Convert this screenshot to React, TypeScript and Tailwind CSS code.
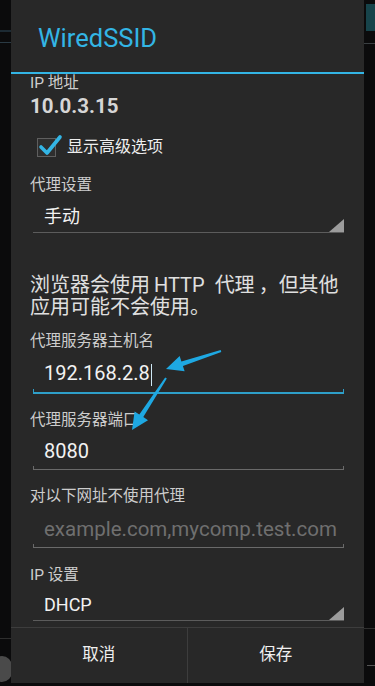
import React from 'react'

// polygon for a hand-drawn style arrow (tail thin, head wide)
function arrowPoints(tx: number, ty: number, hx: number, hy: number, head = 17, half = 8) {
  const dx = hx - tx
  const dy = hy - ty
  const len = Math.hypot(dx, dy)
  const ux = dx / len
  const uy = dy / len
  const px = -uy
  const py = ux
  const bx = hx - ux * head
  const by = hy - uy * head
  const pts = [
    [tx + px * 1, ty + py * 1],
    [bx + px * 2.4, by + py * 2.4],
    [bx + px * half, by + py * half],
    [hx, hy],
    [bx - px * half, by - py * half],
    [bx - px * 2.4, by - py * 2.4],
    [tx - px * 1, ty - py * 1],
  ]
  return pts.map((p) => p.join(',')).join(' ')
}

const Label = ({ children, className = '' }: { children: React.ReactNode; className?: string }) => (
  <div className={`h-[22px] leading-[22px] text-[15.5px] text-[#cdcdcd] ${className}`}>{children}</div>
)

function Spinner({ value, className = '' }: { value: string; className?: string }) {
  return (
    <div className={`ml-[3px] w-[311px] flex items-end justify-between border-b border-[#5c5c5c] ${className}`}>
      <span className="pl-[11px] leading-[24px] text-[18px] text-[#f2f2f2] mb-[3px]">{value}</span>
      <svg width="15" height="13" viewBox="0 0 15 13" className="block">
        <polygon points="15,0 15,13 0,13" fill="#9c9c9c" />
      </svg>
    </div>
  )
}

function Field({
  value,
  placeholder,
  focused,
  className = '',
}: {
  value?: string
  placeholder?: string
  focused?: boolean
  className?: string
}) {
  const line = focused ? 'border-[#2e9fc9]' : 'border-[#6a6a6a]'
  return (
    <div className={`ml-[3px] w-[311px] ${className}`}>
      <div className="pl-[11px] pr-[10px] overflow-hidden whitespace-nowrap leading-[24px] text-[20px]">
        {value ? (
          <span className="text-[#f2f2f2]">
            {value}
            {focused && <span className="inline-block align-middle ml-[1px] w-[1.5px] h-[22px] bg-[#cfe8f5]" />}
          </span>
        ) : (
          <span className="text-[20.5px] text-[#6f6f6f]">{placeholder}</span>
        )}
      </div>
      <div className={`mt-[3px] ${focused ? 'h-[5px] border-b-2' : 'h-[4px] border-b'} border-x ${line}`} />
    </div>
  )
}

export default function App() {
  return (
    <div className="relative w-[375px] h-[686px] bg-[#0b0b0c] overflow-hidden font-[Roboto,'Noto_Sans_CJK_SC',sans-serif]">
      {/* what shows behind the dialog */}
      <div className="absolute left-0 top-[30px] w-[11px] h-[2px] bg-[#1c2a33]" />
      <div className="absolute left-0 top-[42px] w-[11px] h-[1px] bg-[#2a3a44]" />
      <div className="absolute right-0 top-[4px] w-[9px] h-[27px] bg-[#17444b]" />
      <div className="absolute right-0 top-[43px] w-[11px] h-[1px] bg-[#3a3f42]" />
      <div className="absolute right-0 top-[628px] w-[11px] h-[1px] bg-[#2e2e2e]" />
      <div className="absolute left-0 top-[638px] w-[11px] h-[1px] bg-[#2e2e2e]" />
      <div className="absolute left-[-8px] top-[656px] w-[20px] h-[26px] rounded-full bg-[#4a4a4a]" />
      <div className="absolute right-0 top-[665px] w-[8px] h-[1px] bg-[#555]" />

      <div className="relative ml-[11px] w-[353px] h-[683px] bg-[#282828] flex flex-col">
        <div className="h-[72px] pt-[4px] pl-[27px] flex items-center text-[25.5px] text-[#33b5e5]">WiredSSID</div>
        <div className="h-[2px] bg-[#33b5e5]" />

        <div className="flex-1 pl-[19px] pr-[20px]">
          <div className="h-[18px] leading-[18px] text-[15.5px] text-[#cdcdcd]">IP 地址</div>
          <div className="h-[28px] leading-[28px] text-[20.5px] font-bold text-[#d6d6d6]">10.0.3.15</div>

          <div className="mt-[6px] h-[42px] flex items-center">
            <div className="relative ml-[7px] w-[19px] h-[19px] border border-[#5f5f5f] bg-[#2e2e2e]">
              <svg width="26" height="24" viewBox="0 0 26 24" className="absolute left-[0px] top-[-7px]">
                <path d="M3 15 L9 21 L22 5" fill="none" stroke="#33b5e5" strokeWidth="3.6" strokeLinecap="round" strokeLinejoin="round" />
              </svg>
            </div>
            <span className="ml-[11px] text-[16px] text-[#eeeeee]">显示高级选项</span>
          </div>

          <Label className="mt-[6px]">代理设置</Label>
          <Spinner value="手动" className="h-[37px]" />

          <div className="mt-[41px] leading-[22px] text-[20px] text-[#e0e0e0]">
            <div className="whitespace-nowrap">
              浏览器会使用<span className="ml-[4px]">HTTP</span>
              <span className="ml-[10px]">代理</span>
              <span className="ml-[4px]">，</span>
              <span>但其他</span>
            </div>
            <div>应用可能不会使用。</div>
          </div>

          <Label className="mt-[12px]">代理服务器主机名</Label>
          <Field value="192.168.2.8" focused className="pt-[9px]" />

          <Label className="mt-[15px]">代理服务器端口</Label>
          <Field value="8080" className="pt-[8px]" />

          <Label className="mt-[15px]">对以下网址不使用代理</Label>
          <Field placeholder="example.com,mycomp.test.com" className="pt-[10px]" />

          <Label className="mt-[16px]">IP 设置</Label>
          <Spinner value="DHCP" className="h-[35px]" />
        </div>

        <div className="h-[56px] border-t border-[#3d3d3d] grid grid-cols-2">
          <button className="flex items-center justify-center text-[16.5px] text-[#f0f0f0] border-r border-[#3d3d3d]">取消</button>
          <button className="flex items-center justify-center text-[16.5px] text-[#f0f0f0]">保存</button>
        </div>
      </div>

      {/* annotation arrows drawn over the screenshot */}
      <svg width="375" height="686" className="absolute left-0 top-0 pointer-events-none">
        <polygon points={arrowPoints(221, 351, 166, 369)} fill="#1ea8e2" />
        <polygon points={arrowPoints(166, 378, 132, 430)} fill="#1ea8e2" />
      </svg>
    </div>
  )
}
